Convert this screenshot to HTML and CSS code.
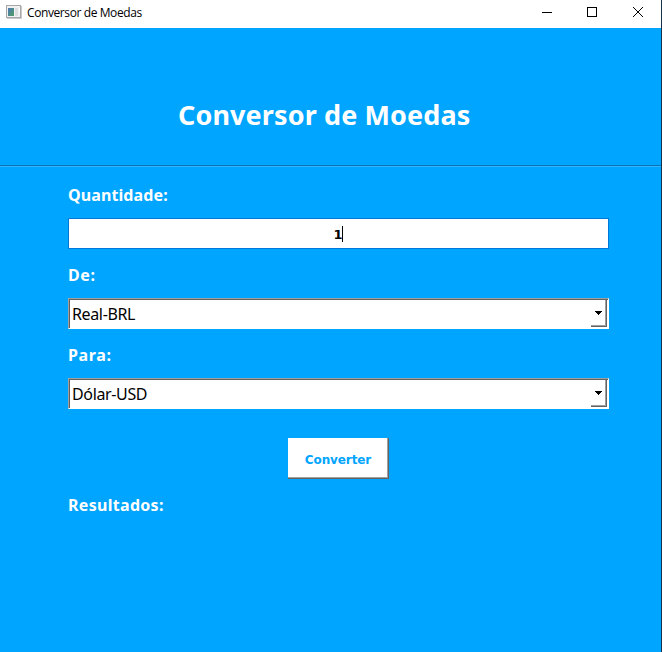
FILE: index.html
```html
<!DOCTYPE html>
<html lang="pt-BR">
<head>
<meta charset="utf-8">
<title>Conversor de Moedas</title>
<link rel="stylesheet" href="styles.css">
</head>
<body>
<div class="window">
  <header class="titlebar">
    <svg class="app-icon" width="16" height="14" viewBox="0 0 16 14">
      <defs><linearGradient id="g" x1="0" y1="0" x2="1" y2="1"><stop offset="0" stop-color="#4c78b8"/><stop offset="1" stop-color="#4f9e62"/></linearGradient></defs>
      <rect x=".5" y=".5" width="14" height="12" fill="#f1f1f1" stroke="#a5a7aa"/>
      <path d="M1 13.5h14.5V1" fill="none" stroke="#c9cacc"/>
      <rect x="2" y="3" width="6" height="8" fill="url(#g)"/>
      <rect x="9" y="3" width="3" height="8" fill="#dcdfe1"/>
      <rect x="13" y="3" width="1" height="4" fill="#fff"/>
    </svg>
    <span class="caption">Conversor de Moedas</span>
    <svg class="controls" width="102" height="12" viewBox="0 0 102 12" fill="none" stroke="#000">
      <path d="M0 5.5h10" shape-rendering="crispEdges"/>
      <rect x="45.5" y=".5" width="9" height="9" shape-rendering="crispEdges"/>
      <path d="M91 0l10 10M101 0l-10 10"/>
    </svg>
  </header>
  <section class="hero"><h1>Conversor de Moedas</h1></section>
  <main class="form">
    <label class="label quantity">Quantidade:</label>
    <div class="entry"><span>1</span><i class="caret"></i></div>
    <label class="label from">De:</label>
    <div class="combo"><span class="value real">Real-BRL</span>
      <span class="drop"><svg width="7" height="4" viewBox="0 0 7 4" shape-rendering="crispEdges"><path d="M0 0h7v1H6v1H5v1H4v1H3V3H2V2H1V1H0z"/></svg></span></div>
    <label class="label to">Para:</label>
    <div class="combo"><span class="value dolar">Dólar-USD</span>
      <span class="drop"><svg width="7" height="4" viewBox="0 0 7 4" shape-rendering="crispEdges"><path d="M0 0h7v1H6v1H5v1H4v1H3V3H2V2H1V1H0z"/></svg></span></div>
    <button class="convert"><span>Converter</span></button>
    <div class="label results">Resultados:</div>
  </main>
</div>
</body>
</html>
```
FILE: styles.css
```css
* { box-sizing: border-box; }
body { margin: 0; background: #00a5ff; }
.window {
  width: 662px;
  height: 652px;
  overflow: hidden;
  background: #00a5ff;
  border-right: 1px solid #16324a;
}
.titlebar {
  display: flex;
  align-items: flex-start;
  height: 28px;
  padding: 5px 17px 0 6px;
  background: #fff;
}
.caption {
  margin-left: 5px;
  font: 12px/16px "Open Sans", sans-serif;
  letter-spacing: -0.4px;
  color: #000;
  white-space: nowrap;
}
.controls { margin: 2px 0 0 auto; }
.hero {
  height: 139px;
  padding: 68px 0 0 178px;
  border-bottom: 1px solid #32b5ff;
  box-shadow: inset 0 -1px #0873b5;
}
h1 {
  margin: 0;
  font: bold 27px/38px "Noto Sans", sans-serif;
  letter-spacing: 0.11px;
  color: #fff;
  white-space: nowrap;
}
.form {
  display: flex;
  flex-direction: column;
  width: 541px;
  margin: 16px 0 0 68px;
}
.label {
  height: 24px;
  margin-bottom: 11px;
  font: bold 16px/24px "Noto Sans", sans-serif;
  color: #fff;
  white-space: nowrap;
}
.quantity { letter-spacing: 0.1px; }
.from, .to { letter-spacing: 0.65px; }
.results { letter-spacing: 0.3px; }
.entry, .combo { height: 31px; margin-bottom: 14px; background: #fff; }
.entry {
  display: flex;
  align-items: center;
  justify-content: center;
  padding-right: 1px;
  border: 1px solid #0078d7;
  font: bold 13px/18px "DejaVu Sans", sans-serif;
}
.entry span { padding-top: 2px; letter-spacing: -1px; }
.caret { width: 1px; height: 16px; background: #000; }
.combo {
  display: flex;
  justify-content: space-between;
  border: solid;
  border-width: 1px;
  border-color: #a0a0a0 #fff #fff #a0a0a0;
  box-shadow: inset 1px 1px #636363;
}
.value {
  padding-left: 3px;
  font: 16px/30px "Noto Sans", sans-serif;
  letter-spacing: -0.36px;
  white-space: nowrap;
}
.drop {
  width: 16px;
  height: 28px;
  margin-right: 1px;
  padding: 10px 0 0 4px;
  border: solid #636363;
  border-width: 1px 1px 1px 0;
  box-shadow: inset -1px -1px #a0a0a0;
  line-height: 0;
}
.convert {
  width: 101px;
  height: 41px;
  margin: 15px 0 14px 220px;
  padding: 2px 1px 0 0;
  background: #fff;
  border: 0;
  box-shadow: inset -1px -1px #636363, inset -2px -2px #a0a0a0;
  font: bold 12px/16px "DejaVu Sans", sans-serif;
  letter-spacing: -0.1px;
  color: #00a5ff;
  white-space: nowrap;
}
```
